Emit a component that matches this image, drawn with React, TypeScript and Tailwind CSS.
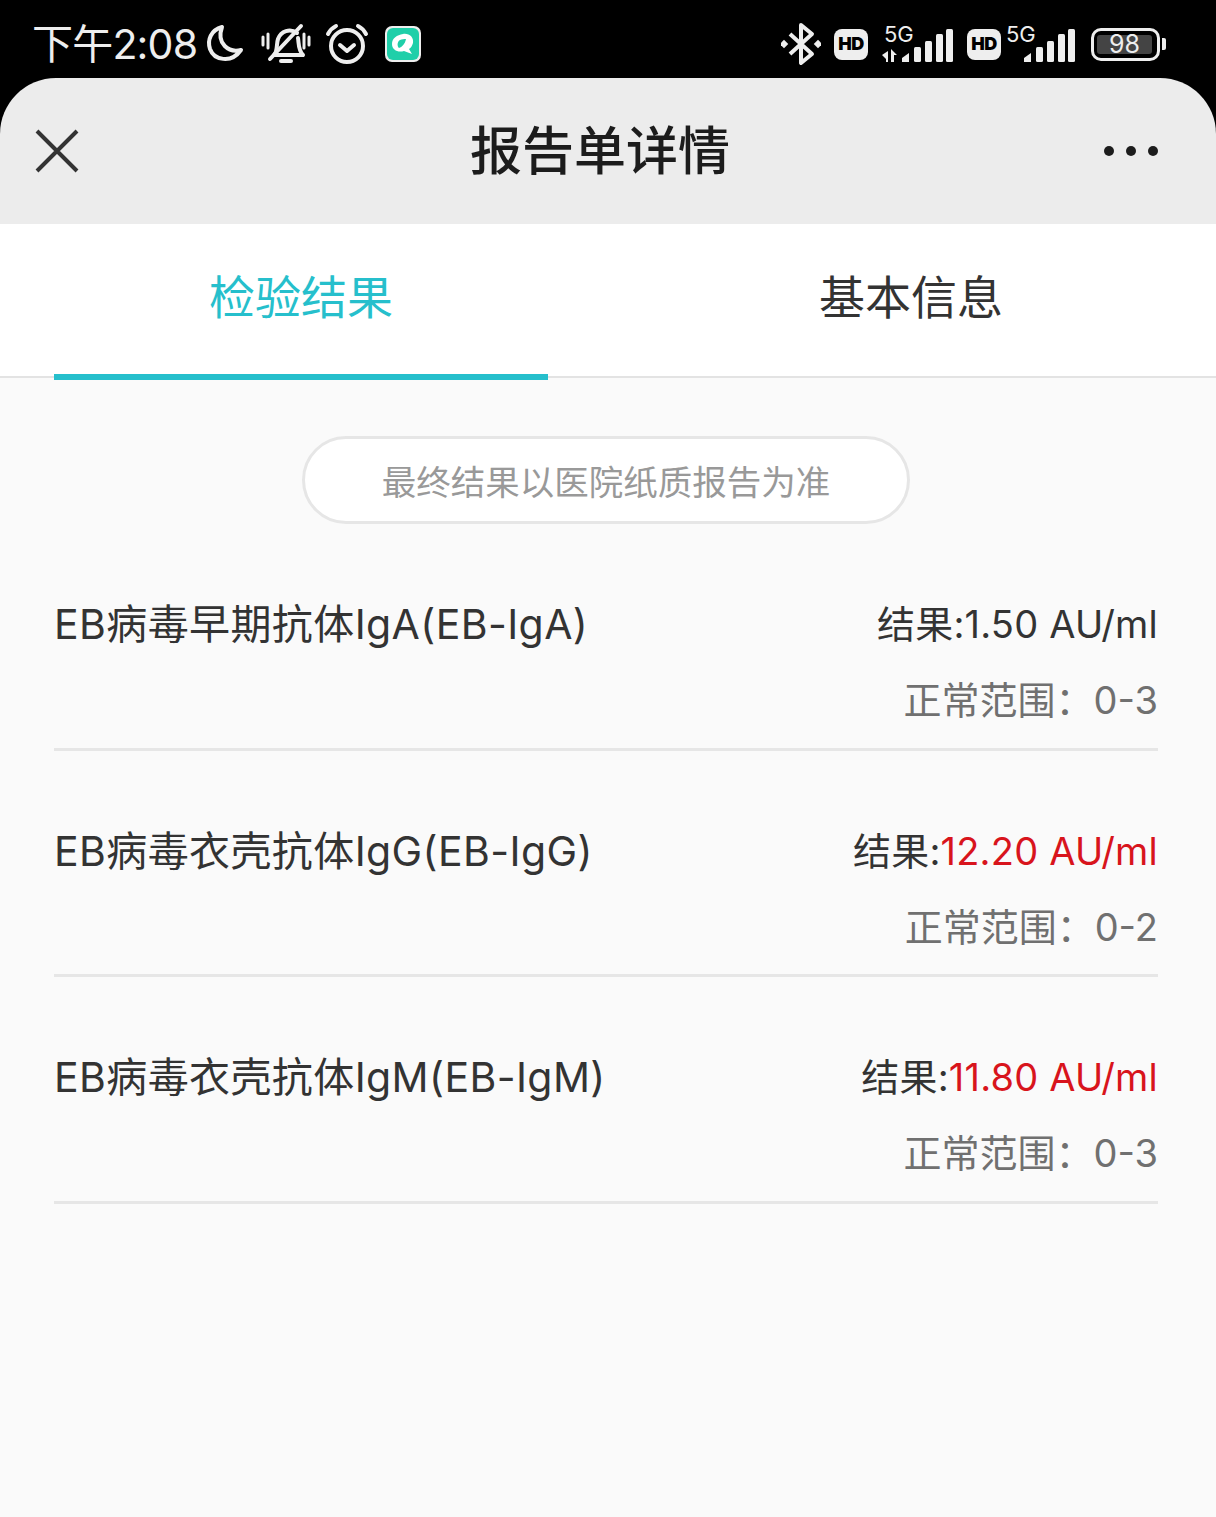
const font = { fontFamily: '"Inter", "Noto Sans CJK SC", sans-serif' }

function Signal({ data }: { data?: boolean }) {
  return (
    <svg width="72" height="48" viewBox="0 -8 72 48" className="-mt-[6px] block">
      <text x="2" y="17" fontSize="22" fill="#eee" fontFamily="Inter">5G</text>
      <path d="M20 37v-4l7-5v9z" fill="#eee" />
      <rect x="32" y="22" width="7" height="15" rx="1.5" fill="#eee" />
      <rect x="43" y="16" width="7" height="21" rx="1.5" fill="#eee" />
      <rect x="54" y="9" width="7" height="28" rx="1.5" fill="#eee" />
      <rect x="64" y="4" width="7" height="33" rx="1.5" fill="#eee" />
      {data && <path d="M6 26v11H4v-3l-4-4zM9 24l6 6h-3v7H9z" fill="#eee" />}
    </svg>
  )
}

function Hd() {
  return (
    <span className="flex h-[31px] w-[34px] items-center justify-center rounded-[8px] bg-[#eeeeee] text-[18px] font-black leading-none tracking-[-0.5px] text-black">
      HD
    </span>
  )
}

function StatusBar() {
  return (
    <div className="flex h-[78px] items-center justify-between bg-black pl-[32px] pr-[50px] pt-[10px] text-[#eeeeee]">
      <div className="flex items-center">
        <span className="text-[41px] leading-[48px] tracking-[-0.8px]">下午2:08</span>
        <svg width="40" height="40" viewBox="0 0 40 40" fill="none" stroke="#eee" strokeWidth="4" strokeLinecap="round" strokeLinejoin="round" className="ml-[8px]">
          <path d="M17 3 C6 6 2 16 5 25 C9 36 26 40 36 26 C24 29 11 20 17 3Z" />
        </svg>
        <svg width="50" height="44" viewBox="0 0 50 44" fill="none" stroke="#eee" strokeWidth="4" strokeLinecap="round" strokeLinejoin="round" className="ml-[16px]">
          <path d="M2 15v8M7 12v14M43 12v14M48 15v8" strokeWidth="3" />
          <path d="M13 33c4-4 2-10 4-16 3-8 12-11 19-6M37 16c1 6 0 12 5 17H14" />
          <path d="M9 37L40 4" />
          <path d="M20 39h10" />
        </svg>
        <svg width="44" height="44" viewBox="0 0 44 44" fill="none" stroke="#eee" strokeWidth="4" strokeLinecap="round" strokeLinejoin="round" className="ml-[14px]">
          <circle cx="22" cy="24" r="16" />
          <path d="M15 23l7 6 7-6M3 12c2-4 4-6 8-8M41 12c-2-4-4-6-8-8" />
        </svg>
        <svg width="36" height="36" viewBox="0 0 36 36" className="ml-[16px]">
          <rect width="36" height="36" rx="7" fill="#eee" />
          <rect x="2" y="2" width="32" height="32" rx="6" fill="#1fcfa9" />
          <path d="M18 8c6-1 11 3 10 9-1 3-2 5-4 6l3 5-8-3c-6 2-12-1-12-7S12 9 18 8zM15 14c-3 2-3 6-1 8 3-1 6-4 7-9-2 0-4 0-6 1z" fill="#fff" fillRule="evenodd" />
        </svg>
      </div>
      <div className="flex items-center">
        <svg width="40" height="44" viewBox="0 0 40 44" fill="none" stroke="#eee" strokeWidth="4" className="mr-[13px]">
          <path d="M9 12l22 20-11 9V3l11 9-22 20" strokeLinejoin="round" />
          <rect x="0" y="19" width="6" height="6" fill="#eee" stroke="none" transform="rotate(45 3 22)" />
          <rect x="34" y="19" width="6" height="6" fill="#eee" stroke="none" transform="rotate(45 37 22)" />
        </svg>
        <Hd />
        <div className="ml-[14px]"><Signal data /></div>
        <div className="ml-[13px]"><Hd /></div>
        <div className="ml-[3px]"><Signal /></div>
        <div className="ml-[15px] flex items-center">
          <div className="h-[33px] w-[69px] rounded-[10px] border-[3px] border-[#eeeeee] py-[4px] pl-[3px] pr-[5px]">
            <div className="flex h-full w-full items-center justify-center rounded-[3px] bg-[#444444] text-[25px] leading-none text-[#eeeeee]">
              98
            </div>
          </div>
          <div className="ml-[2px] h-[12px] w-[4px] rounded-r-[2px] bg-[#eeeeee]" />
        </div>
      </div>
    </div>
  )
}

const rows = [
  { name: "EB病毒早期抗体IgA(EB-IgA)", value: "1.50 AU/ml", high: false, range: "0-3" },
  { name: "EB病毒衣壳抗体IgG(EB-IgG)", value: "12.20 AU/ml", high: true, range: "0-2" },
  { name: "EB病毒衣壳抗体IgM(EB-IgM)", value: "11.80 AU/ml", high: true, range: "0-3" },
]

export default function App() {
  return (
    <div className="flex min-h-[1517px] flex-col bg-black" style={font}>
      <StatusBar />
      <div className="flex h-[146px] items-center justify-between rounded-t-[56px] bg-[#ececec] pl-[35px] pr-[58px]">
        <svg width="44" height="44" viewBox="0 0 44 44" stroke="#333" strokeWidth="4">
          <path d="M2 2l40 40M42 2L2 42" />
        </svg>
        <h1 className="ml-[17px] pt-[2px] text-[52px] font-medium leading-none text-[#1c1c1c]">报告单详情</h1>
        <div className="flex gap-[12px]">
          <span className="h-[10px] w-[10px] rounded-full bg-[#1c1c1c]" />
          <span className="h-[10px] w-[10px] rounded-full bg-[#1c1c1c]" />
          <span className="h-[10px] w-[10px] rounded-full bg-[#1c1c1c]" />
        </div>
      </div>

      <div className="flex h-[154px] border-b-2 border-[#e3e3e3] bg-white px-[54px]">
        <div className="relative flex w-[494px] items-center justify-center pb-[6px] text-[46px] leading-none text-[#26bfcc]">
          检验结果
          <div className="absolute bottom-[-4px] left-0 right-0 h-[6px] bg-[#26bfcc]" />
        </div>
        <div className="flex flex-1 items-center justify-center pb-[6px] pl-[112px] text-[46px] leading-none text-[#333333]">
          基本信息
        </div>
      </div>

      <div className="flex-1 bg-[#fafafa] pl-[54px] pr-[58px] pt-[58px]">
        <div className="mx-auto flex h-[88px] w-[608px] items-center justify-center rounded-full border-[3px] border-[#e6e6e6] bg-white pt-[5px] text-[34.5px] text-[#999999]">
          最终结果以医院纸质报告为准
        </div>
        {rows.map((row) => (
          <div key={row.name} className="flex h-[226.5px] justify-between border-b-[3px] border-[#e6e6e6] pt-[72px]">
            <div className="text-[41px] leading-[56px] tracking-[0.4px] text-[#333333]">{row.name}</div>
            <div className="text-right">
              <div className="text-[38px] leading-[56px] tracking-[0.2px] text-[#333333]">
                结果:<span className={row.high ? "text-[#d8141c]" : ""}>{row.value}</span>
              </div>
              <div className="mt-[20px] text-[38px] leading-[56px] text-[#707070]">正常范围：{row.range}</div>
            </div>
          </div>
        ))}
      </div>
    </div>
  )
}
